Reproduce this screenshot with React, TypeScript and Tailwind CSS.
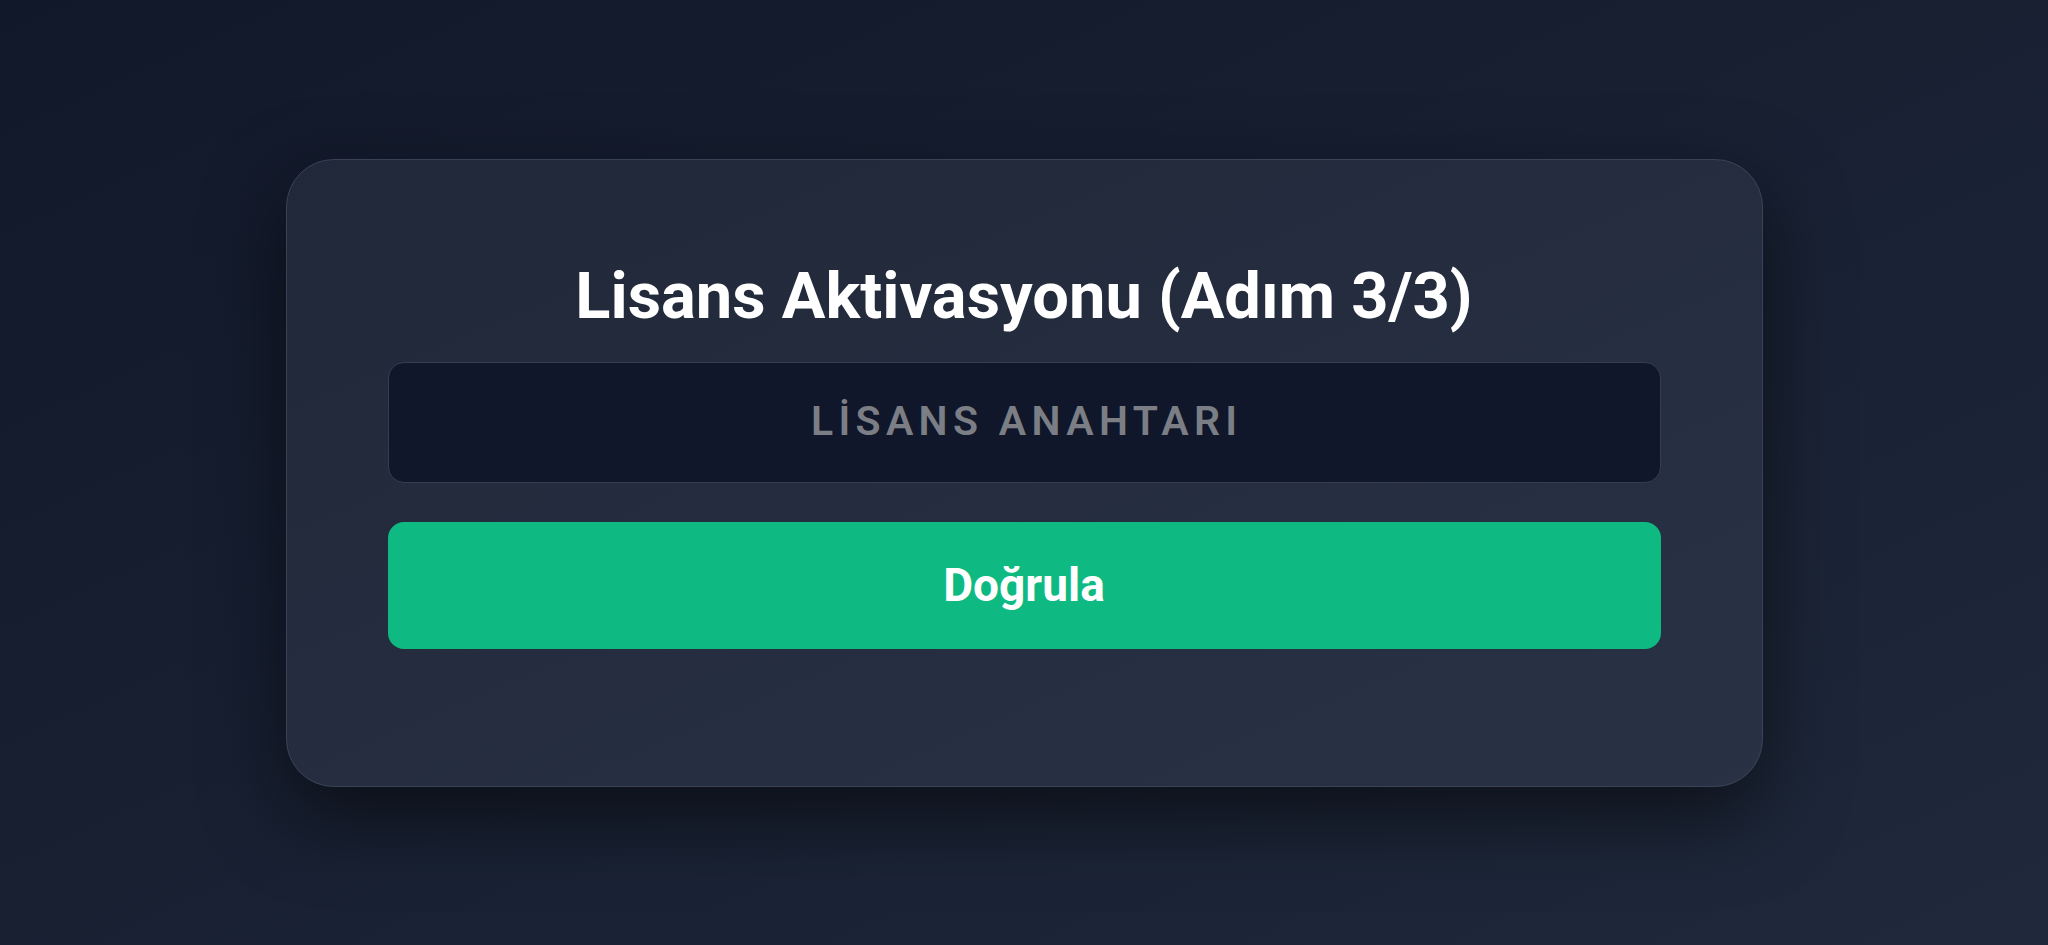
import React from "react";

const App: React.FC = () => {
  return (
    <div className="min-h-screen w-full flex items-center justify-center bg-gradient-to-br from-[#111829] to-[#1f293b] font-['Roboto',sans-serif]">
      <div className="w-[1477px] rounded-[48px] border border-[#3a4356] bg-gradient-to-br from-[#202839] to-[#293245] px-[101px] pt-[98px] pb-[137px] shadow-[0_30px_80px_rgba(0,0,0,0.55)]">
        <h1 className="text-center text-[65px] leading-[77px] font-bold text-white">
          Lisans Aktivasyonu (Adım 3/3)
        </h1>

        <div className="mt-[27px] flex h-[121px] items-center justify-center rounded-2xl border border-[#353d50] bg-[#10172a]">
          <span className="pl-[0.13em] text-[41px] font-semibold tracking-[0.13em] text-[#7b7e85]">
            LİSANS ANAHTARI
          </span>
        </div>

        <button className="mt-[39px] flex h-[127px] w-full items-center justify-center rounded-2xl bg-[#0fba82] text-[46px] font-bold text-white">
          Doğrula
        </button>
      </div>
    </div>
  );
};

export default App;
